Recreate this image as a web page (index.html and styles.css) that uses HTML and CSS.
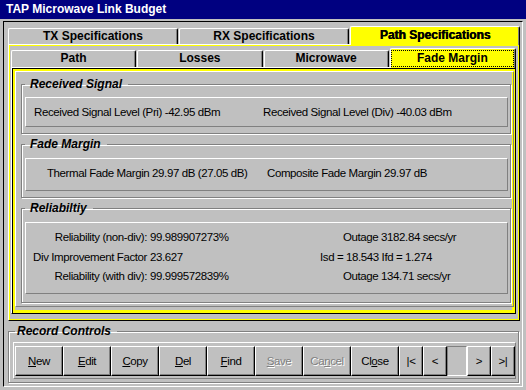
FILE: index.html
```html
<!DOCTYPE html>
<html lang="en">
<head>
    <meta charset="UTF-8">
    <meta name="viewport" content="width=device-width, initial-scale=1.0">
    <title>TAP Microwave Link Budget</title>
    <link rel="stylesheet" href="styles.css">
</head>
<body>
    <div class="window">
        <div class="titlebar">TAP Microwave Link Budget</div>
        <div class="client">

            <div class="tabs top-tabs">
                <div class="tab">TX Specifications</div>
                <div class="tab">RX Specifications</div>
                <div class="tab selected heavy">Path Specifications</div>
            </div>

            <div class="outer-panel">
                <div class="tabs sub-tabs">
                    <div class="tab">Path</div>
                    <div class="tab">Losses</div>
                    <div class="tab">Microwave</div>
                    <div class="tab selected"><span class="focus">Fade Margin</span></div>
                </div>

                <div class="inner-panel">
                    <div class="etched">

                        <fieldset class="group group-signal">
                            <legend>Received Signal</legend>
                            <div class="readout readout-signal">
                                <span class="cell signal-pri">Received Signal Level (Pri) -42.95 dBm</span>
                                <span class="cell">Received Signal Level (Div) -40.03 dBm</span>
                            </div>
                        </fieldset>

                        <fieldset class="group group-fade">
                            <legend>Fade Margin</legend>
                            <div class="readout readout-fade">
                                <span class="cell fade-thermal">Thermal Fade Margin 29.97 dB (27.05 dB)</span>
                                <span class="cell">Composite Fade Margin 29.97 dB</span>
                            </div>
                        </fieldset>

                        <fieldset class="group group-rel">
                            <legend>Reliabiltiy</legend>
                            <div class="readout readout-rel">
                                <div class="rel-row">
                                    <span class="rel-label">Reliability (non-div):</span>
                                    <span class="rel-value">99.989907273%</span>
                                    <span class="rel-side outage">Outage 3182.84 secs/yr</span>
                                </div>
                                <div class="rel-row">
                                    <span class="rel-label">Div Improvement Factor</span>
                                    <span class="rel-value">23.627</span>
                                    <span class="rel-side">Isd = 18.543 Ifd = 1.274</span>
                                </div>
                                <div class="rel-row">
                                    <span class="rel-label">Reliability (with div):</span>
                                    <span class="rel-value">99.999572839%</span>
                                    <span class="rel-side outage">Outage 134.71 secs/yr</span>
                                </div>
                            </div>
                        </fieldset>

                    </div>
                </div>
            </div>

            <fieldset class="group record">
                <legend>Record Controls</legend>
                <div class="button-bar">
                    <button class="btn"><u>N</u>ew</button>
                    <button class="btn"><u>E</u>dit</button>
                    <button class="btn"><u>C</u>opy</button>
                    <button class="btn"><u>D</u>el</button>
                    <button class="btn"><u>F</u>ind</button>
                    <button class="btn" disabled><u>S</u>ave</button>
                    <button class="btn" disabled>Ca<u>n</u>cel</button>
                    <button class="btn">Cl<u>o</u>se</button>
                    <button class="btn nav">|&lt;</button>
                    <button class="btn nav">&lt;</button>
                    <div class="record-no"></div>
                    <button class="btn nav">&gt;</button>
                    <button class="btn nav">&gt;|</button>
                </div>
            </fieldset>

        </div>
    </div>
</body>
</html>
```

FILE: styles.css
```css
* {
    box-sizing: border-box;
}

body {
    margin: 0;
    background-color: #c0c0c0;
    font-family: "Liberation Sans", Arial, sans-serif;
    font-size: 11.5px;
    letter-spacing: -0.4px;
    color: #000;
}

.window {
    width: 526px;
    height: 390px;
    overflow: hidden;
}

.titlebar {
    height: 19px;
    padding-left: 6px;
    background-color: #000080;
    color: #fff;
    font: bold 12px/19px "Liberation Sans", Arial, sans-serif;
    letter-spacing: 0;
}

.client {
    height: 366px;
    margin: 2px 3px 0 3px;
    padding: 4px 0 0 4px;
    border: 1px solid;
    border-color: #000 #fff #fff #000;
}

/* tab strips */
.tabs {
    display: flex;
    align-items: flex-end;
    gap: 1px;
}

.tab {
    flex: 1;
    position: relative;
    z-index: 1;
    border-top: 1px solid #fff;
    border-left: 1px solid #fff;
    border-right: 1px solid #000;
    border-radius: 2px 2px 0 0;
    box-shadow: inset -1px 0 #808080;
    text-align: center;
    font: bold 12px "Liberation Sans", Arial, sans-serif;
    letter-spacing: 0;
}

.tab.selected {
    background-color: #ffff00;
    margin-bottom: -1px;
}

.heavy {
    text-shadow: 0.6px 0 0 #000;
}

.top-tabs {
    width: 512px;
    height: 18px;
}

.top-tabs .tab {
    height: 16px;
    line-height: 14px;
}

.top-tabs .tab.selected {
    height: 19px;
    line-height: 17px;
}

.sub-tabs {
    height: 19px;
}

.sub-tabs .tab {
    height: 17px;
    line-height: 15px;
}

.sub-tabs .tab.selected {
    height: 20px;
    line-height: 16px;
    padding: 1px 1px 0 0;
}

.focus {
    display: block;
    border: 1px dotted #000;
    height: 17px;
    line-height: 15px;
}

/* tab pages */
.outer-panel {
    width: 512px;
    height: 277px;
    padding: 3px 3px 0 2px;
    border: 1px solid;
    border-color: #fff #000 #000 #fff;
    box-shadow: inset 0 0 0 1px #ffff00;
}

.inner-panel {
    height: 247px;
    padding: 3px 1px 0 3px;
    border: 1px solid;
    border-color: #fff #000 #000 #fff;
    box-shadow: inset 1px 1px 0 #000, inset 0 0 0 3px #ffff00;
}

.etched {
    height: 236px;
    padding: 5px 2px 0 5px;
    border: 1px solid;
    border-color: #fff #808080 #808080 #fff;
}

/* framed groups */
.group {
    margin: 0 0 3px 0;
    padding: 0 2px 0 3px;
    min-width: 0;
    border: 1px solid #808080;
    box-shadow: inset 1px 1px 0 #fff, 1px 1px 0 #fff;
}

.group legend {
    padding: 0 6px 0 5px;
    font: italic bold 12px/14px "Liberation Sans", Arial, sans-serif;
    letter-spacing: 0;
}

.group-signal {
    padding-top: 6px;
    padding-bottom: 6px;
}

.group-fade {
    padding-top: 7px;
    padding-bottom: 6px;
}

.group-rel {
    padding-top: 7px;
    padding-bottom: 8px;
}

.readout {
    border: 1px solid;
    border-color: #fff #808080 #808080 #fff;
}

.readout-signal,
.readout-fade {
    display: flex;
}

.readout-signal {
    height: 30px;
    line-height: 28px;
}

.readout-fade {
    height: 33px;
    line-height: 29px;
}

.cell {
    white-space: nowrap;
}

.signal-pri {
    width: 237px;
    padding-left: 8px;
}

.fade-thermal {
    width: 241px;
    padding-left: 21px;
}

.readout-rel {
    height: 72px;
    padding-top: 5px;
}

.rel-row {
    display: flex;
    height: 19.5px;
    line-height: 19px;
    white-space: nowrap;
}

.rel-label {
    width: 124px;
    padding-right: 3px;
    text-align: right;
}

.rel-value {
    width: 170px;
}

.outage {
    padding-left: 23px;
}

/* record controls */
.record {
    width: 511px;
    margin-top: 3px;
    padding: 4px 0 3px 4px;
}

.record legend {
    margin-left: 2px;
    padding: 0 6px 0 2px;
}

.button-bar {
    display: flex;
    width: 503px;
    height: 37px;
    padding: 3px 0 0 1px;
    border: 1px solid;
    border-color: #fff #808080 #808080 #fff;
}

.btn {
    width: 48px;
    height: 30px;
    margin: 0;
    padding: 0;
    border: 1px solid;
    border-color: #fff #000 #000 #fff;
    box-shadow: inset -1px -1px 0 #808080;
    background-color: #c0c0c0;
    font-family: "Liberation Sans", Arial, sans-serif;
    font-size: 11.5px;
    letter-spacing: -0.4px;
    color: #000;
}

.btn:disabled {
    color: #808080;
    text-shadow: 1px 1px 0 #fff;
}

.btn.nav {
    width: 24px;
}

.record-no {
    width: 20px;
    height: 30px;
    border: 1px solid;
    border-color: #808080 #fff #fff #808080;
}
```
